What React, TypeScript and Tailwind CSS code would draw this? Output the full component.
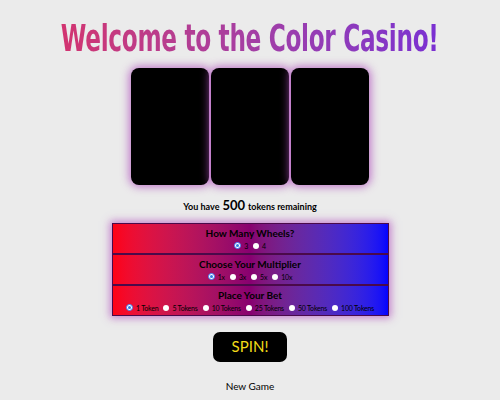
import React, { useState } from 'react'

const wheelOptions = ['3', '4']
const multiplierOptions = ['1x', '3x', '5x', '10x']
const betOptions = ['1 Token', '5 Tokens', '10 Tokens', '25 Tokens', '50 Tokens', '100 Tokens']

function Radio({ checked }: { checked: boolean }) {
  return checked ? (
    <span className="w-[7px] h-[7px] rounded-full bg-white border border-[#3b82f6] flex items-center justify-center">
      <span className="block w-[3px] h-[3px] rounded-full bg-[#2f7de0]" />
    </span>
  ) : (
    <span className="inline-block w-[6px] h-[6px] rounded-full bg-white" />
  )
}

function OptionRow({ title, options, value, onChange }: { title: string; options: string[]; value: string; onChange: (v: string) => void }) {
  return (
    <div className="h-[31px] border border-[#4a0a4a] flex flex-col items-center pt-[3px]">
      <div className="text-[10px] font-bold leading-[13px] text-black">{title}</div>
      <div className="flex items-center gap-[5px] mt-[1px]">
        {options.map((o) => (
          <label key={o} className="flex items-center gap-[3px] text-[7px] leading-[10px] tracking-[-0.2px] text-black" onClick={() => onChange(o)}>
            <Radio checked={o === value} />
            <span>{o}</span>
          </label>
        ))}
      </div>
    </div>
  )
}

export default function App() {
  const [wheels, setWheels] = useState('3')
  const [mult, setMult] = useState('1x')
  const [bet, setBet] = useState('1 Token')

  return (
    <div className="w-[500px] h-[400px] bg-[#ebebeb] flex flex-col items-center overflow-hidden" style={{ fontFamily: 'Lato, "Open Sans", sans-serif' }}>
      <h1
        className="mt-[16px] h-[44px] text-[38px] leading-[44px] font-bold whitespace-nowrap scale-x-[0.68] bg-gradient-to-r from-[#d23370] to-[#7a2fd2] bg-clip-text text-transparent tracking-[-0.5px]"
        style={{ fontFamily: '"DejaVu Sans Condensed", "DejaVu Sans", sans-serif' }}
      >
        Welcome to the Color Casino!
      </h1>

      {/* wheels */}
      <div className="mt-[8px] flex gap-[2px]">
        {[0, 1, 2].map((i) => (
          <div key={i} className="w-[78px] h-[117px] bg-black rounded-[8px] shadow-[0_0_8px_2px_rgba(176,80,190,0.75)]" />
        ))}
      </div>

      <div className="mt-[11px] text-[9px] font-bold text-black flex items-baseline gap-[3px]">
        <span>You have</span>
        <span className="text-[13px]">500</span>
        <span>tokens remaining</span>
      </div>

      {/* options panel */}
      <div className="mt-[7px] w-[277px] bg-gradient-to-r from-[#ff0010] via-[#880070] to-[#0000ff] shadow-[0_0_8px_2px_rgba(176,80,190,0.7)]">
        <OptionRow title="How Many Wheels?" options={wheelOptions} value={wheels} onChange={setWheels} />
        <OptionRow title="Choose Your Multiplier" options={multiplierOptions} value={mult} onChange={setMult} />
        <OptionRow title="Place Your Bet" options={betOptions} value={bet} onChange={setBet} />
      </div>

      <button className="mt-[16px] w-[74px] h-[30px] bg-black rounded-[7px] text-[#f2dc18] text-[15px]">SPIN!</button>

      <button className="mt-[17px] text-[10px] text-black">New Game</button>
    </div>
  )
}
